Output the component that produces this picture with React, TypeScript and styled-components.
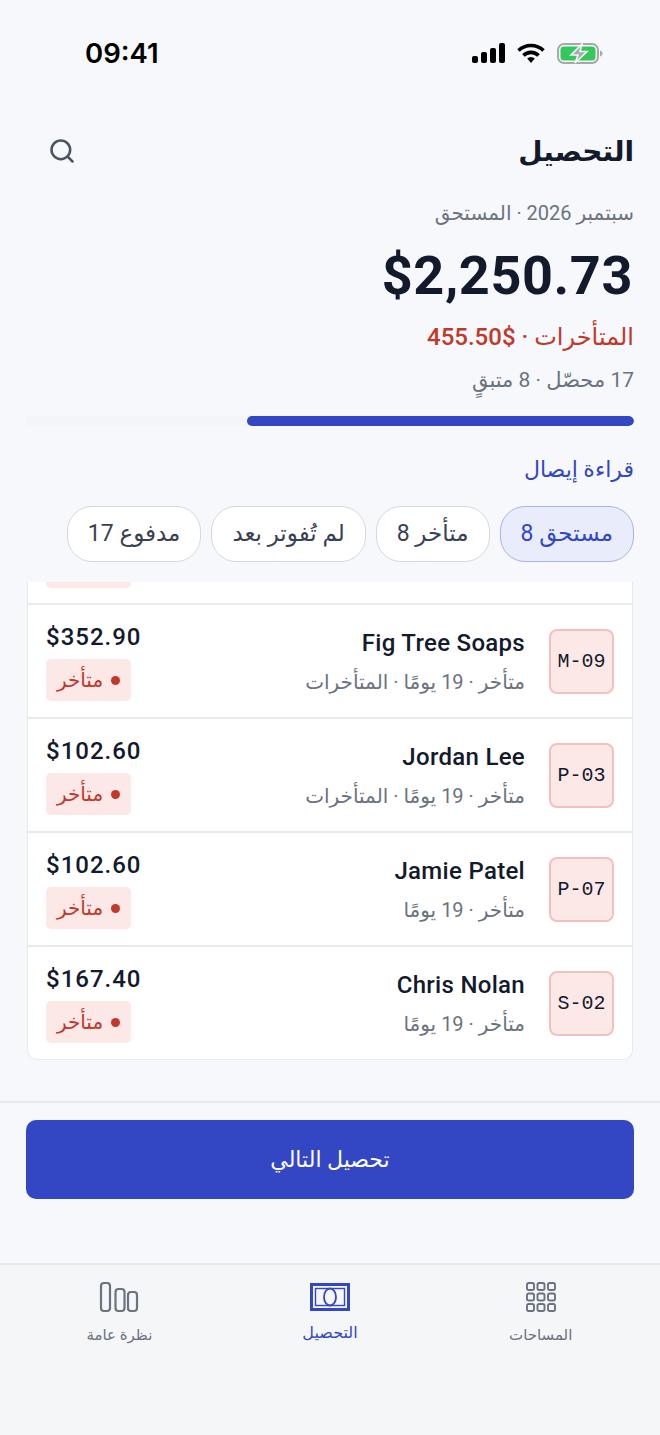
import React from "react";
import styled, { createGlobalStyle } from "styled-components";
import { Search } from "lucide-react";

const SANS = `"Roboto", "Noto Sans", "DejaVu Sans", sans-serif`;
const MONO = `"Liberation Mono", "DejaVu Sans Mono", monospace`;

const colors = {
  page: "#f6f8fb",
  ink: "#131a2b",
  muted: "#6b7280",
  red: "#c0392b",
  redBg: "#fde8e8",
  blue: "#3346c4",
  line: "#e6e9ee",
};

const GlobalStyle = createGlobalStyle`
  html, body {
    margin: 0;
    padding: 0;
    background: ${colors.page};
  }
  * {
    box-sizing: border-box;
  }
`;

const Screen = styled.div`
  width: 660px;
  height: 1435px;
  display: flex;
  flex-direction: column;
  overflow: hidden;
  direction: rtl;
  background: ${colors.page};
  color: ${colors.ink};
  font-family: ${SANS};
`;

const StatusBar = styled.div`
  height: 106px;
  flex-shrink: 0;
  display: flex;
  direction: ltr;
  align-items: center;
  justify-content: space-between;
  padding: 0 57px 0 85px;
`;

const Clock = styled.span`
  font-family: "Inter", sans-serif;
  font-size: 27.5px;
  font-weight: 600;
  color: #000;
`;

const StatusIcons = styled.div`
  display: flex;
  align-items: center;
  gap: 12px;
`;

const Header = styled.header`
  display: flex;
  flex-direction: column;
  align-items: stretch;
  padding: 20px 26px 0;
`;

const TitleRow = styled.div`
  display: flex;
  align-items: center;
  justify-content: space-between;
  height: 50px;
  padding-left: 22px;
  color: #4b5563;
`;

const Title = styled.h1`
  margin: 0;
  font-size: 28px;
  font-weight: 600;
  color: ${colors.ink};
`;

const Period = styled.div`
  margin-top: 23px;
  font-size: 20px;
  line-height: 28px;
  color: ${colors.muted};
`;

const Amount = styled.div`
  direction: ltr;
  text-align: right;
  margin-top: 17px;
  padding-right: 1px;
  font-size: 54px;
  line-height: 64px;
  font-weight: 700;
  letter-spacing: 0.6px;
`;

const Overdue = styled.div`
  margin-top: 13px;
  font-size: 24px;
  line-height: 32px;
  font-weight: 500;
  color: ${colors.red};
`;

const Progress = styled.div`
  margin-top: 13px;
  font-size: 21px;
  line-height: 28px;
  color: ${colors.muted};
`;

const Track = styled.div`
  margin-top: 22px;
  height: 10px;
  border-radius: 5px;
  background: #f3f5f8;
  overflow: hidden;
`;

const Fill = styled.div`
  height: 100%;
  border-radius: 5px;
  background: ${colors.blue};
`;

const ReceiptLink = styled.a`
  margin-top: 29px;
  font-size: 22px;
  line-height: 30px;
  font-weight: 500;
  color: ${colors.blue};
`;

const Chips = styled.div`
  display: flex;
  gap: 10px;
  margin-top: 21px;
`;

const Chip = styled.div<{ $active?: boolean }>`
  height: 56px;
  padding: 0 20px;
  display: flex;
  align-items: center;
  border-radius: 25px;
  font-size: 23px;
  line-height: 30px;
  white-space: nowrap;
  border: 1px solid ${({ $active }) => ($active ? "#a9b3e6" : "#d5d8de")};
  background: ${({ $active }) => ($active ? "#e8ecfb" : "#fff")};
  color: ${({ $active }) => ($active ? colors.blue : "#374151")};
`;

const ListViewport = styled.div`
  margin-top: 20px;
  height: 519px;
  flex-shrink: 0;
  padding: 0 27px;
`;

const Card = styled.div`
  background: #fff;
  border: 1px solid ${colors.line};
  border-top: 0;
  border-radius: 0 0 10px 10px;
  overflow: hidden;
`;

/* tail of the row scrolled out of view: only the bottom of its badge shows */
const ScrolledRow = styled.div`
  height: 23px;
  display: flex;
  justify-content: flex-end;
  padding: 0 18px;
  border-bottom: 2px solid ${colors.line};
`;

const ScrolledBadge = styled.div`
  width: 85px;
  height: 6px;
  border-radius: 0 0 5px 5px;
  background: ${colors.redBg};
`;

const Row = styled.div`
  height: 114px;
  display: flex;
  align-items: center;
  padding: 0 18px;
  border-bottom: 2px solid ${colors.line};

  &:last-child {
    border-bottom: 0;
    height: 112px;
  }
`;

const UnitTile = styled.div`
  width: 65px;
  height: 65px;
  flex-shrink: 0;
  display: flex;
  align-items: center;
  justify-content: center;
  margin-left: 24px;
  direction: ltr;
  border-radius: 8px;
  border: 2px solid #f3c1bd;
  background: ${colors.redBg};
  font-family: ${MONO};
  font-size: 20px;
  color: ${colors.ink};
`;

const RowMain = styled.div`
  flex: 1;
  min-width: 0;
  display: flex;
  flex-direction: column;
  gap: 9px;
`;

const Name = styled.div`
  font-size: 24px;
  line-height: 32px;
  font-weight: 500;
  letter-spacing: 0.3px;
`;

const Detail = styled.div`
  font-size: 20px;
  line-height: 28px;
  color: ${colors.muted};
`;

const RowSide = styled.div`
  display: flex;
  flex-direction: column;
  align-items: flex-end;
  gap: 6px;
`;

const Price = styled.div`
  direction: ltr;
  font-size: 24px;
  line-height: 32px;
  font-weight: 500;
  letter-spacing: 1px;
`;

const Badge = styled.div`
  height: 42px;
  width: 85px;
  display: flex;
  align-items: center;
  justify-content: center;
  gap: 8px;
  border-radius: 5px;
  background: ${colors.redBg};
  color: ${colors.red};
  font-size: 20px;
  line-height: 28px;
  font-weight: 500;
`;

const Dot = styled.span`
  width: 9px;
  height: 9px;
  border-radius: 50%;
  background: ${colors.red};
`;

const Footer = styled.div`
  border-top: 2px solid ${colors.line};
  padding: 17px 26px 0;
`;

const PrimaryButton = styled.button`
  width: 100%;
  height: 79px;
  border: 0;
  border-radius: 10px;
  background: ${colors.blue};
  color: #fff;
  font-family: ${SANS};
  font-size: 22px;
  font-weight: 500;
`;

const TabBar = styled.nav`
  margin-top: 64px;
  flex: 1;
  display: grid;
  grid-template-columns: repeat(3, 1fr);
  align-items: start;
  border-top: 2px solid ${colors.line};
  background: #f4f6f8;
  padding: 16px 14px 0;
`;

const Tab = styled.div<{ $active?: boolean }>`
  display: flex;
  flex-direction: column;
  align-items: center;
  gap: ${({ $active }) => ($active ? "8px" : "10px")};
  font-size: ${({ $active }) => ($active ? "16px" : "15px")};
  line-height: 24px;
  font-weight: ${({ $active }) => ($active ? 500 : 400)};
  color: ${({ $active }) => ($active ? colors.blue : colors.muted)};
`;

const SignalIcon = () => (
  <svg width="33" height="20" viewBox="0 0 33 20" fill="#000">
    <rect x="0" y="13" width="6" height="7" rx="2" />
    <rect x="9" y="9" width="6" height="11" rx="2" />
    <rect x="18" y="5" width="6" height="15" rx="2" />
    <rect x="27" y="0" width="6" height="20" rx="2" />
  </svg>
);

const WifiIcon = () => (
  <svg width="28" height="20" viewBox="0 0 28 20" fill="none" stroke="#000" strokeWidth="3.6">
    <path d="M1.500 7.500a18 18 0 0 1 25 0" />
    <path d="M6.500 12.500a10.500 10.500 0 0 1 15 0" />
    <path d="M14 20l-3.800-4.400a5.400 5.400 0 0 1 7.600 0z" fill="#000" stroke="none" />
  </svg>
);

const BatteryIcon = () => (
  <svg width="46" height="21" viewBox="0 0 46 21">
    <rect x="1" y="1" width="40" height="19" rx="6" fill="none" stroke="#a6a8ab" strokeWidth="2" />
    <rect x="3.500" y="3.500" width="35" height="14" rx="3.500" fill="#34c759" />
    <path d="M43 7.500v6c1.600-.5 2.500-1.600 2.500-3s-.9-2.500-2.500-3z" fill="#a6a8ab" />
    <path d="M25 1 14 12h7l-3 8 12-11.500h-7z" fill="#a6a8ab" stroke="#f6f8fb" strokeWidth="1.600" />
  </svg>
);

const GridIcon = () => (
  <svg width="32" height="32" viewBox="0 0 32 32" fill="none" stroke="currentColor" strokeWidth="1.900">
    {[2, 12.500, 23].map((y) =>
      [2, 12.500, 23].map((x) => <rect key={`${x}-${y}`} x={x} y={y} width="7" height="7" rx="1.800" />),
    )}
  </svg>
);

const CashIcon = () => (
  <svg width="40" height="32" viewBox="0 0 40 32" fill="none" stroke="currentColor">
    <rect x="1.500" y="3.500" width="37" height="25" strokeWidth="3" />
    <rect x="5.500" y="7.500" width="29" height="17" strokeWidth="1.400" />
    <ellipse cx="20" cy="16" rx="6" ry="8.500" strokeWidth="1.800" />
  </svg>
);

const BarsIcon = () => (
  <svg width="40" height="32" viewBox="0 0 40 32" fill="none" stroke="currentColor" strokeWidth="2.200">
    <rect x="2" y="2" width="9" height="28" rx="3" />
    <rect x="16.500" y="8" width="9" height="22" rx="3" />
    <rect x="29" y="11" width="9" height="19" rx="3" />
  </svg>
);

const rows = [
  { code: "M-09", name: "Fig Tree Soaps", detail: "متأخر · 19 يومًا · المتأخرات", price: "$352.90" },
  { code: "P-03", name: "Jordan Lee", detail: "متأخر · 19 يومًا · المتأخرات", price: "$102.60" },
  { code: "P-07", name: "Jamie Patel", detail: "متأخر · 19 يومًا", price: "$102.60" },
  { code: "S-02", name: "Chris Nolan", detail: "متأخر · 19 يومًا", price: "$167.40" },
];

const App = () => {
  return (
    <Screen>
      <GlobalStyle />
      <StatusBar>
        <Clock>09:41</Clock>
        <StatusIcons>
          <SignalIcon />
          <WifiIcon />
          <BatteryIcon />
        </StatusIcons>
      </StatusBar>
      <Header>
        <TitleRow>
          <Title>التحصيل</Title>
          <Search size={28} strokeWidth={2.2} />
        </TitleRow>
        <Period>سبتمبر 2026 · المستحق</Period>
        <Amount>$2,250.73</Amount>
        <Overdue>المتأخرات · $455.50</Overdue>
        <Progress>17 محصّل · 8 متبقٍ</Progress>
        <Track>
          <Fill style={{ width: `${(387 / 608) * 100}%` }} />
        </Track>
        <ReceiptLink>قراءة إيصال</ReceiptLink>
        <Chips>
          <Chip $active>مستحق 8</Chip>
          <Chip>متأخر 8</Chip>
          <Chip>لم تُفوتر بعد</Chip>
          <Chip>مدفوع 17</Chip>
        </Chips>
      </Header>
      <ListViewport>
        <Card>
          <ScrolledRow>
            <ScrolledBadge />
          </ScrolledRow>
          {rows.map((row) => (
            <Row key={row.code}>
              <UnitTile>{row.code}</UnitTile>
              <RowMain>
                <Name>{row.name}</Name>
                <Detail>{row.detail}</Detail>
              </RowMain>
              <RowSide>
                <Price>{row.price}</Price>
                <Badge>
                  <Dot />
                  متأخر
                </Badge>
              </RowSide>
            </Row>
          ))}
        </Card>
      </ListViewport>
      <Footer>
        <PrimaryButton>تحصيل التالي</PrimaryButton>
      </Footer>
      <TabBar>
        <Tab>
          <GridIcon />
          المساحات
        </Tab>
        <Tab $active>
          <CashIcon />
          التحصيل
        </Tab>
        <Tab>
          <BarsIcon />
          نظرة عامة
        </Tab>
      </TabBar>
    </Screen>
  );
};

export default App;
